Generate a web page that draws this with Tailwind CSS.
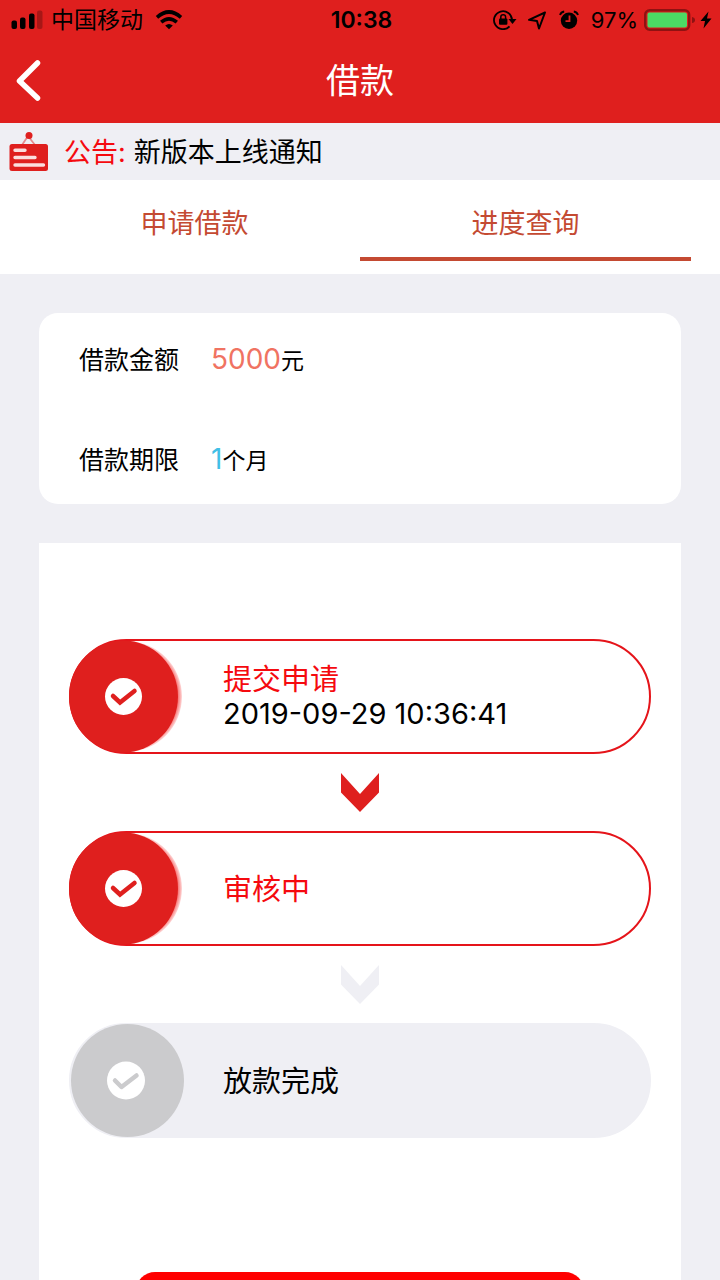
<!DOCTYPE html>
<html lang="zh-CN">
<head>
    <meta charset="UTF-8">
    <meta name="viewport" content="width=device-width, initial-scale=1.0">
    <title>借款</title>
    <script src="https://cdn.jsdelivr.net/npm/@tailwindcss/browser@4"></script>
</head>
<body class="h-screen flex flex-col overflow-hidden bg-[#efeff4] text-black font-['Inter','Noto_Sans_CJK_SC',sans-serif]">
    <!-- Header -->
    <header class="bg-[#df1f1e] shrink-0">
        <!-- Status bar -->
        <div class="grid grid-cols-[1fr_auto_1fr] items-center h-10 pl-[11px] pr-2">
            <div class="flex items-center">
                <svg class="w-8 h-5" viewBox="0 0 32 20">
                    <rect x="0.500" y="10.500" width="5.500" height="8.500" rx="2"/>
                    <rect x="9" y="7.500" width="5.500" height="11.500" rx="2"/>
                    <rect x="18" y="3.500" width="5.500" height="15.500" rx="2"/>
                    <rect x="26" y="0.500" width="5.500" height="18.500" rx="2" fill-opacity="0.25"/>
                </svg>
                <span class="ml-2 text-[23px] leading-10">中国移动</span>
                <svg class="ml-3 w-7 h-5" viewBox="0 0 28 20" fill="none" stroke="#000" stroke-width="3.600">
                    <path d="M2 7.300Q14 -3.300 26 7.300"/>
                    <path d="M6.200 12.200Q14 5.600 21.800 12.200"/>
                    <path d="M10.200 15.500Q14 12.300 17.800 15.500L14 19.300Z" fill="#000" stroke="none"/>
                </svg>
            </div>
            <span class="text-[23px] font-semibold">10:38</span>
            <div class="flex items-center justify-end">
                <!-- Rotation lock -->
                <svg class="w-6 h-5" viewBox="0 0 24 20" fill="none" stroke="#000" stroke-width="1.800">
                    <path d="M19 10A9 9 0 1 0 16.500 16.400"/>
                    <path d="M15.500 9H23.500L19.500 14Z" fill="#000" stroke="none"/>
                    <rect x="6" y="8.500" width="8.400" height="6.300" rx="1" fill="#000" stroke="none"/>
                    <path d="M7.800 9V7Q7.800 4.800 10.200 4.800T12.600 7V9" stroke-width="1.500"/>
                </svg>
                <!-- Location -->
                <svg class="ml-2.5 w-5 h-5" viewBox="0 0 20 20" fill="none" stroke="#000" stroke-width="2" stroke-linejoin="round">
                    <path d="M18 2.500L2 9.800L10 11L12 18.500Z"/>
                </svg>
                <!-- Alarm -->
                <svg class="ml-3 w-5 h-5" viewBox="0 0 20 20" fill="none" stroke="#000">
                    <circle cx="10" cy="10.800" r="8.200" fill="#000" stroke="none"/>
                    <path d="M10.500 5.500V11.200H6.500" stroke="#df1f1e" stroke-width="1.800"/>
                    <path d="M1 5Q2 2 5.200 1.500M14.800 1.500Q18 2 19 5" stroke-width="1.800"/>
                </svg>
                <span class="ml-3 text-[22px]">97%</span>
                <svg class="ml-1.5 w-[52px] h-6" viewBox="0 0 52 24">
                    <rect x="1.200" y="2.200" width="44" height="19.600" rx="4.500" fill="none" stroke="#8f1212" stroke-width="2.400"/>
                    <rect x="3.500" y="4.500" width="39.500" height="15" rx="2" fill="#4cd964"/>
                    <path d="M48 9Q51 9.500 51 12T48 15Z" fill="#8f1212"/>
                </svg>
                <svg class="ml-1 w-3 h-5" viewBox="0 0 12 20">
                    <path d="M8.500 1.500L0.500 11H5L3.500 18.500L11.500 8.500H7Z"/>
                </svg>
            </div>
        </div>
        <!-- Navigation bar -->
        <div class="grid grid-cols-[1fr_auto_1fr] items-center h-[83px] px-4 pb-[2px] text-white">
            <button type="button" aria-label="返回" class="justify-self-start">
                <svg class="w-7 h-[42px]" viewBox="0 0 28 42" fill="none" stroke="currentColor" stroke-width="5.500" stroke-linecap="round" stroke-linejoin="round">
                    <path d="M21.500 3L3.500 21L21.500 38"/>
                </svg>
            </button>
            <h1 class="text-[34px] leading-10">借款</h1>
        </div>
    </header>

    <!-- Notice -->
    <div class="flex items-center shrink-0 h-[57px] px-2 text-[27px]">
        <svg class="w-10 h-10" viewBox="0 0 40 40">
            <path d="M14 13L20 4L27 13" fill="none" stroke="#e58a8d" stroke-width="1.800"/>
            <circle cx="21" cy="3.500" r="3.500" fill="#df1f1e"/>
            <rect x="1.500" y="12" width="38.500" height="27" rx="2.500" fill="#df1f1e"/>
            <path d="M7 18.300H17M7 25.500H27M7 33H35.500" stroke="#fbdede" stroke-width="3.400" stroke-linecap="round"/>
        </svg>
        <p class="flex pt-1 pl-4 gap-2">
            <span class="text-[#f50a0f]">公告:</span>
            <span>新版本上线通知</span>
        </p>
    </div>

    <!-- Tabs -->
    <nav class="flex shrink-0 h-[94px] px-[29px] pb-[13px] bg-white text-[27px] text-[#c44a32]">
        <a href="#" class="flex-1 flex items-center justify-center pt-3 border-b-4 border-transparent">申请借款</a>
        <a href="#" aria-current="page" class="flex-1 flex items-center justify-center pt-3 border-b-4 border-[#c44a32]">进度查询</a>
    </nav>

    <main class="flex-1 min-h-0 overflow-y-auto [scrollbar-width:none] pt-[39px] px-[39px]">
        <!-- Loan info -->
        <dl class="flex flex-col gap-[66px] pt-[31px] pb-[26px] px-10 bg-white rounded-[19px] leading-[31px]">
            <div class="flex items-baseline h-[34px]">
                <dt class="text-[25px]">借款金额</dt>
                <dd class="ml-8 text-[23px]"><span class="text-[28px] text-[#f07362]">5000</span>元</dd>
            </div>
            <div class="flex items-baseline h-[34px]">
                <dt class="text-[25px]">借款期限</dt>
                <dd class="ml-8 text-[23px]"><span class="text-[28px] text-[#41bfe6]">1</span>个月</dd>
            </div>
        </dl>

        <!-- Progress -->
        <section class="mt-[39px] pt-24 pb-24 px-[30px] bg-white">
            <ol class="flex flex-col text-[29px] leading-[34px]">
                <li class="flex items-center h-[115px] rounded-full border-2 border-[#e5141a]">
                    <svg class="-ml-0.5 w-[115px] h-[115px] shrink-0" viewBox="0 0 115 115">
                        <defs>
                            <radialGradient id="glow" gradientUnits="userSpaceOnUse" cx="57.500" cy="57.500" r="56.500">
                                <stop offset="0.920" stop-color="#f98080"/>
                                <stop offset="1" stop-color="#fff4f4"/>
                            </radialGradient>
                        </defs>
                        <path d="M57.500 2A55.500 55.500 0 0 1 57.500 113Z" fill="url(#glow)"/>
                        <ellipse cx="54.500" cy="57.500" rx="54.500" ry="56" fill="#df1f1e"/>
                        <circle cx="54.500" cy="57.500" r="18.500" fill="#fff"/>
                        <path d="M44 57L51 63.500L65.500 52" fill="none" stroke="#df1f1e" stroke-width="4.500" stroke-linecap="round"/>
                    </svg>
                    <div class="ml-[39px]">
                        <p class="text-[#f50a0f]">提交申请</p>
                        <p>2019-09-29 10:36:41</p>
                    </div>
                </li>
                <li class="flex justify-center py-[19px]" aria-hidden="true">
                    <svg class="w-[39px] h-[39px]" viewBox="0 0 39 39" fill="#df1f1e"><path d="M0 0L19 21L38 0V19.500L19 39L0 19.500Z"/></svg>
                </li>
                <li class="flex items-center h-[115px] rounded-full border-2 border-[#e5141a]">
                    <svg class="-ml-0.5 w-[115px] h-[115px] shrink-0" viewBox="0 0 115 115">
                        <path d="M57.500 2A55.500 55.500 0 0 1 57.500 113Z" fill="url(#glow)"/>
                        <ellipse cx="54.500" cy="57.500" rx="54.500" ry="56" fill="#df1f1e"/>
                        <circle cx="54.500" cy="57.500" r="18.500" fill="#fff"/>
                        <path d="M44 57L51 63.500L65.500 52" fill="none" stroke="#df1f1e" stroke-width="4.500" stroke-linecap="round"/>
                    </svg>
                    <p class="ml-[39px] pt-0.5 text-[#f50a0f]">审核中</p>
                </li>
                <li class="flex justify-center py-[19px]" aria-hidden="true">
                    <svg class="w-[39px] h-[39px]" viewBox="0 0 39 39" fill="#efeff4"><path d="M0 0L19 21L38 0V19.500L19 39L0 19.500Z"/></svg>
                </li>
                <li class="flex items-center h-[115px] rounded-full border-2 border-[#efeff4] bg-[#efeff4]">
                    <svg class="-ml-0.5 w-[115px] h-[115px] shrink-0" viewBox="0 0 115 115">
                        <circle cx="58.500" cy="57.500" r="56.500" fill="#cbcbcd"/>
                        <circle cx="57" cy="57.500" r="19" fill="#fff"/>
                        <path d="M46 57.500L52.500 64L67.500 52.500" fill="none" stroke="#cbcbcd" stroke-width="4.500" stroke-linecap="round" stroke-linejoin="round"/>
                    </svg>
                    <p class="ml-[39px] pt-0.5">放款完成</p>
                </li>
            </ol>
            <button type="button" aria-label="刷新进度" class="block mt-[134px] mx-auto w-[77%] h-[77px] rounded-[19px] bg-[#ff0000]"></button>
        </section>
    </main>
</body>
</html>
